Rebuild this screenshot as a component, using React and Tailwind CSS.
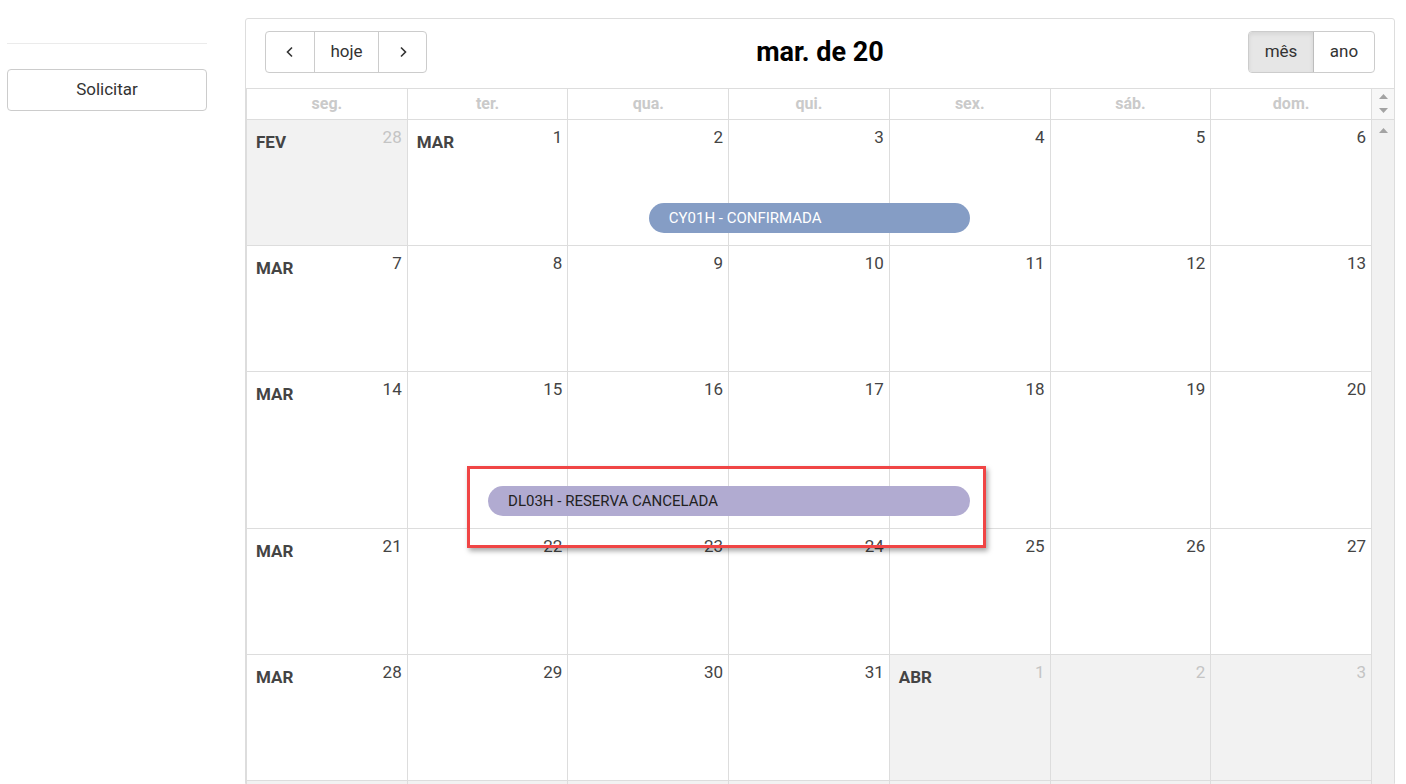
import React from "react";

const DOW = ["seg.", "ter.", "qua.", "qui.", "sex.", "sáb.", "dom."];

const c = (d, m, other = false) => ({ d, m, other });

const WEEKS = [
  { h: "h-[126px]", days: [c(28, "FEV", true), c(1, "MAR"), c(2), c(3), c(4), c(5), c(6)], ev: { left: "left-[35.714%]", width: "w-[28.571%]", top: "top-[83px]", label: "CY01H - CONFIRMADA", cls: "bg-[#859dc5] text-white" } },
  { h: "h-[126px]", days: [c(7, "MAR"), c(8), c(9), c(10), c(11), c(12), c(13)] },
  { h: "h-[157px]", days: [c(14, "MAR"), c(15), c(16), c(17), c(18), c(19), c(20)], ev: { left: "left-[21.428%]", width: "w-[42.857%]", top: "top-[114px]", label: "DL03H - RESERVA CANCELADA", cls: "bg-[#b1abd1] text-[#222]" } },
  { h: "h-[126px]", days: [c(21, "MAR"), c(22), c(23), c(24), c(25), c(26), c(27)] },
  { h: "h-[126px]", days: [c(28, "MAR"), c(29), c(30), c(31), c(1, "ABR", true), c(2, null, true), c(3, null, true)] },
  { h: "h-[126px]", days: [c(null, null, true), c(null, null, true), c(null, null, true), c(null, null, true), c(null, null, true), c(null, null, true), c(null, null, true)] },
];

function Tri({ up = true }) {
  return (
    <svg width="9" height="5" viewBox="0 0 9 5">
      {up ? <path d="M0 5 L4.5 0 L9 5 Z" fill="#a3a3a3" /> : <path d="M0 0 L4.5 5 L9 0 Z" fill="#a3a3a3" />}
    </svg>
  );
}

function Chevron({ left }) {
  return (
    <svg width="10" height="12" viewBox="0 0 10 12" fill="none" stroke="#333" strokeWidth="1.6">
      {left ? <path d="M7 1.5 L2.5 6 L7 10.5" /> : <path d="M3 1.5 L7.5 6 L3 10.5" />}
    </svg>
  );
}

export default function App() {
  return (
    <div className="relative flex w-[1406px] h-[784px] overflow-hidden bg-white font-['Roboto',sans-serif]">
      {/* Sidebar */}
      <div className="w-[245px] shrink-0 pl-[7px] pr-[38px] pt-[43px]">
        <div className="border-t border-[#ebebeb]" />
        <button className="mt-[25px] h-[42px] w-full rounded-[4px] border border-[#cccccc] bg-white text-[17px] text-[#333]">
          Solicitar
        </button>
      </div>

      {/* Calendar */}
      <div className="mt-[18px] w-[1150px] shrink-0 border border-[#dddddd] rounded-t-[3px]">
        {/* Toolbar */}
        <div className="grid grid-cols-[1fr_auto_1fr] items-center px-[19px] pt-[12px] pb-[15px]">
          <div className="flex h-[42px] w-fit rounded-[4px] border border-[#cccccc] text-[17px] text-[#333]">
            <div className="flex w-[49px] items-center justify-center border-r border-[#cccccc]"><Chevron left /></div>
            <div className="flex w-[64px] items-center justify-center border-r border-[#cccccc]">hoje</div>
            <div className="flex w-[47px] items-center justify-center"><Chevron /></div>
          </div>
          <div className="text-[27px] font-bold text-black">mar. de 20</div>
          <div className="flex h-[42px] w-fit justify-self-end rounded-[4px] border border-[#cccccc] text-[17px] text-[#333]">
            <div className="flex w-[65px] items-center justify-center rounded-l-[3px] border-r border-[#bdbdbd] bg-[#e6e6e6] shadow-[inset_0_2px_4px_rgba(0,0,0,0.08)]">mês</div>
            <div className="flex w-[60px] items-center justify-center">ano</div>
          </div>
        </div>

        {/* Day-of-week header */}
        <div className="flex border-t border-[#dddddd]">
          <div className="grid w-[1126px] grid-cols-7 border-l border-[#dddddd]">
            {DOW.map((d) => (
              <div key={d} className="flex h-[31px] items-center justify-center border-r border-b border-[#dddddd] text-[16px] font-bold text-[#cacaca]">
                {d}
              </div>
            ))}
          </div>
          <div className="flex w-[22px] flex-col items-center border-b border-[#dddddd] bg-[#f7f7f7] pt-[5px] gap-[9px]">
            <Tri up />
            <Tri up={false} />
          </div>
        </div>

        {/* Body */}
        <div className="flex">
          <div className="w-[1126px] border-l border-[#dddddd]">
            {WEEKS.map((w, wi) => (
              <div key={wi} className={`relative grid grid-cols-7 ${w.h}`}>
                {w.days.map((day, di) => (
                  <div
                    key={di}
                    className={`flex justify-between border-r border-b border-[#dddddd] pl-[9px] pr-[5px] ${day.other ? "bg-[#f2f2f2]" : "bg-white"}`}
                  >
                    <div className="pt-[10px] text-[17px] font-bold text-[#444]">{day.m}</div>
                    <div className={`pt-[5px] text-[17px] ${day.other ? "text-[#c4c4c4]" : "text-[#444]"}`}>{day.d}</div>
                  </div>
                ))}
                {w.ev && (
                  <div className={`absolute ${w.ev.left} ${w.ev.width} ${w.ev.top} flex h-[30px] items-center rounded-full pl-[20px] text-[15px] ${w.ev.cls}`}>
                    {w.ev.label}
                  </div>
                )}
              </div>
            ))}
          </div>
          <div className="flex w-[22px] flex-col items-center bg-[#f1f1f1] pt-[8px]">
            <Tri up />
          </div>
        </div>
      </div>

      {/* Annotation box */}
      <div className="absolute left-[467px] top-[466px] h-[82px] w-[519px] border-[3px] border-[#f04545] shadow-[2px_3px_5px_rgba(0,0,0,0.35)]" />
    </div>
  );
}
